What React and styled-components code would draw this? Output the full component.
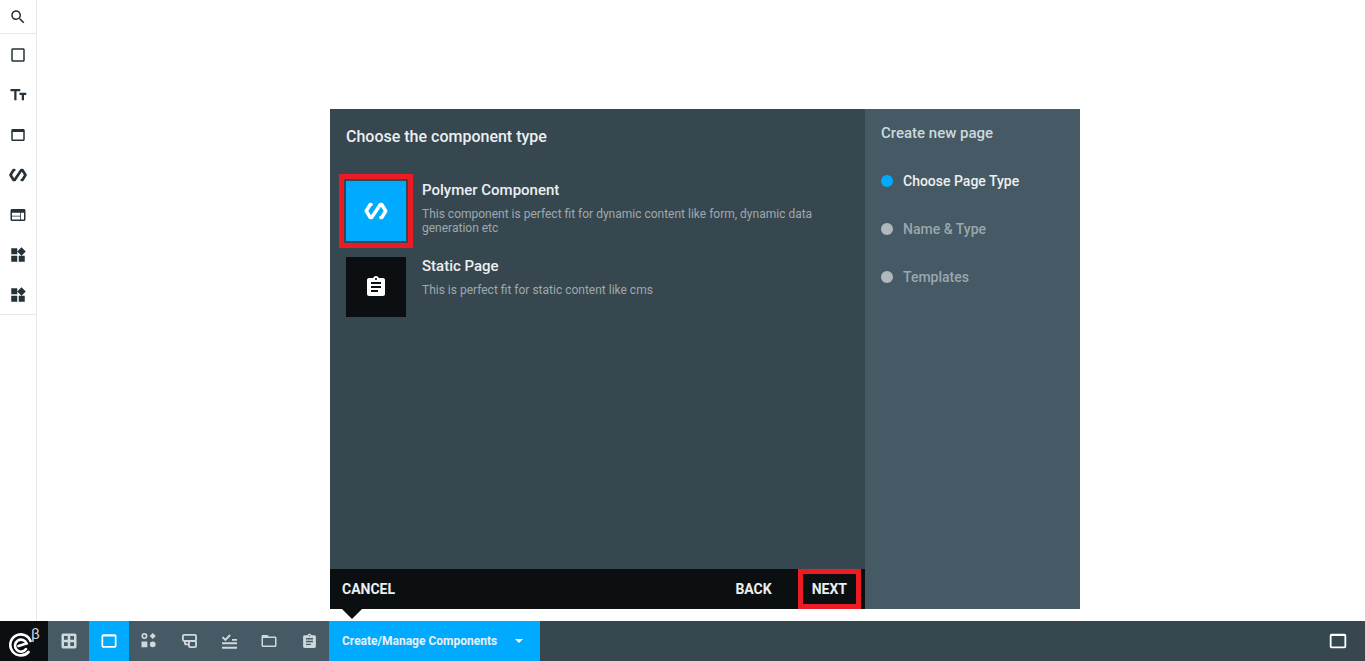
import React from 'react'
import styled, { createGlobalStyle } from 'styled-components'

const BLUE = '#00aaff'
const BLACK = '#0b0f12'
const DARK = '#37474f'
const SLATE = '#455a64'
const RED = '#ed1c24'

const paths = {
  search: 'M15.5 14h-.79l-.28-.27C15.41 12.59 16 11.11 16 9.5 16 5.91 13.09 3 9.5 3S3 5.91 3 9.5 5.91 16 9.5 16c1.61 0 3.09-.59 4.23-1.57l.27.28v.79l5 4.99L20.49 19l-4.99-5zm-6 0C7.01 14 5 11.99 5 9.5S7.01 5 9.5 5 14 7.01 14 9.5 11.99 14 9.5 14z',
  square: 'M19 5v14H5V5h14m0-2H5c-1.1 0-2 .9-2 2v14c0 1.1.9 2 2 2h14c1.1 0 2-.9 2-2V5c0-1.1-.9-2-2-2z',
  size: 'M2 4v3h5v12h3V7h5V4H2zm12 5v3h3v7h3v-7h3V9h-9z',
  asset: 'M19 4H5c-1.11 0-2 .9-2 2v12c0 1.1.89 2 2 2h14c1.1 0 2-.9 2-2V6c0-1.1-.89-2-2-2zm0 14H5V8h14v10z',
  frame: 'M19 4H5a2 2 0 0 0-2 2v12a2 2 0 0 0 2 2h14a2 2 0 0 0 2-2V6a2 2 0 0 0-2-2zm0 14H5V6.5h14V18z',
  web: 'M20 4H4c-1.1 0-1.99.9-1.99 2L2 18c0 1.1.9 2 2 2h16c1.1 0 2-.9 2-2V6c0-1.1-.9-2-2-2zm-5 14H4v-4h11v4zm0-5H4V9h11v4zm5 5h-4V9h4v9z',
  widgets: 'M13 13v8h8v-8h-8zM3 21h8v-8H3v8zM3 3v8h8V3H3zm13.66-1.31L11 7.34 16.66 13l5.66-5.66-5.66-5.65z',
  assignment: 'M19 3h-4.18C14.4 1.84 13.3 1 12 1c-1.3 0-2.4.84-2.82 2H5c-1.1 0-2 .9-2 2v14c0 1.1.9 2 2 2h14c1.1 0 2-.9 2-2V5c0-1.1-.9-2-2-2zm-7 0c.55 0 1 .45 1 1s-.45 1-1 1-1-.45-1-1 .45-1 1-1zm2 14H7v-2h7v2zm3-4H7v-2h10v2zm0-4H7V7h10v2z',
  folder: 'M20 6h-8l-2-2H4c-1.1 0-1.99.9-1.99 2L2 18c0 1.1.9 2 2 2h16c1.1 0 2-.9 2-2V8c0-1.1-.9-2-2-2zm0 12H4V8h16v10z',
  grid: 'M5 3h14a2 2 0 0 1 2 2v14a2 2 0 0 1-2 2H5a2 2 0 0 1-2-2V5a2 2 0 0 1 2-2zm1 3v4.5h4.5V6H6zm7.5 0v4.5H18V6h-4.5zM6 13.5V18h4.5v-4.5H6zm7.5 0V18H18v-4.5h-4.5z',
  shapes: 'M6.5 2.5a3.6 3.6 0 1 1 0 7.2 3.6 3.6 0 0 1 0-7.2zm0 2a1.6 1.6 0 1 0 0 3.2 1.6 1.6 0 0 0 0-3.2zM16.5 2.5l3.7 3.6-3.7 3.6-3.7-3.6zM3 12.5h7v7H3zM16.5 12.5a3.5 3.5 0 1 1 0 7 3.5 3.5 0 0 1 0-7z',
  checks: 'M3.6 13.4h18v2.4h-18zM3.6 19h18v2.4h-18zM15.6 9.6h6v2h-6zM5 6.5l2.6 2.6L12.6 4l1.6 1.6-6.6 6.6-4.2-4.2z',
}

// drawn as strokes, the rounded joins of these do not come out as plain fills
const strokes = {
  polymer: 'M7.5 6H6.7L3 12l3.7 6H8L16 6h1.3L21 12l-3.7 6h-.8',
  flow: 'M6.5 4.7h12.5a1.5 1.5 0 0 1 1.5 1.5v4.3a1.5 1.5 0 0 1-1.5 1.5H6.2a1.5 1.5 0 0 1-1.5-1.5V6.2a1.5 1.5 0 0 1 1.5-1.5zM13.4 12h5.6a1.5 1.5 0 0 1 1.5 1.5v4.3a1.5 1.5 0 0 1-1.5 1.5h-5.6a1.5 1.5 0 0 1-1.5-1.5v-4.3a1.5 1.5 0 0 1 1.5-1.5zM7 12v2a2 2 0 0 0 2 2h2.9',
}

const GlobalStyle = createGlobalStyle`
  html, body {
    margin: 0;
    height: 100%;
    background: #fff;
    overflow: hidden;
  }
  #root {
    height: 100%;
  }
`

const Page = styled.div`
  display: flex;
  flex-direction: column;
  height: 661px;
  font-family: Roboto, "Liberation Sans", sans-serif;
`

const Main = styled.div`
  display: flex;
  flex: 1;
  min-height: 0;
`

const Rail = styled.aside`
  width: 36px;
  flex: none;
  border-right: 1px solid #e8e8e8;
  color: #263238;
`

const RailGroup = styled.div`
  display: flex;
  flex-direction: column;
  border-bottom: 1px solid #e8e8e8;
`

const RailItem = styled.div`
  display: flex;
  align-items: center;
  justify-content: center;
  box-sizing: border-box;
  height: ${props => props.short ? '33px' : '40px'};
  padding-top: ${props => props.short ? '0' : '2px'};
`

const Stage = styled.div`
  flex: 1;
  padding: 109px 0 0 293px;
`

const Modal = styled.section`
  display: grid;
  grid-template-columns: 535px 215px;
  width: 750px;
  height: 500px;
`

const Content = styled.div`
  display: flex;
  flex-direction: column;
  background: ${DARK};
`

const Title = styled.h2`
  margin: 0;
  height: 72px;
  padding: 19px 16px 0;
  box-sizing: border-box;
  font-size: 16px;
  line-height: 18px;
  font-weight: 500;
  color: #eceff1;
`

const TypeList = styled.div`
  flex: 1;
  display: flex;
  flex-direction: column;
  gap: 16px;
  padding: 0 16px;
`

const TypeRow = styled.div`
  display: flex;
  gap: 16px;
`

const TypeIcon = styled.div`
  display: flex;
  align-items: center;
  justify-content: center;
  flex: none;
  width: 60px;
  height: 60px;
  background: ${props => props.selected ? BLUE : BLACK};
  outline: ${props => props.selected ? `5px solid ${RED}` : 'none'};
  outline-offset: 2px;
  color: #fff;
`

const TypeText = styled.div`
  padding-top: 1px;
  width: 410px;
`

const TypeName = styled.div`
  font-size: 15px;
  line-height: 16px;
  font-weight: 500;
  color: #eceff1;
`

const TypeDesc = styled.p`
  margin: 9px 0 0;
  font-size: 12px;
  line-height: 14px;
  color: #9fa9ae;
`

const Footer = styled.footer`
  display: flex;
  align-items: stretch;
  height: 40px;
  padding: 0 4px 0 0;
  background: ${BLACK};
`

const FooterButton = styled.div`
  display: flex;
  align-items: center;
  justify-content: center;
  padding: 0 ${props => props.next ? '14px' : '12px'};
  margin-right: ${props => props.back ? '14px' : '0'};
  margin-left: ${props => props.back ? 'auto' : '0'};
  outline: ${props => props.next ? `5px solid ${RED}` : 'none'};
  outline-offset: -5px;
  font-size: 14px;
  font-weight: 700;
  color: #eceff1;
`

const Steps = styled.nav`
  background: ${SLATE};
  padding: 15px 16px;
`

const StepsTitle = styled.div`
  font-size: 15px;
  line-height: 18px;
  font-weight: 500;
  color: #cfd8dc;
  margin-bottom: 15px;
`

const Step = styled.div`
  display: flex;
  align-items: center;
  gap: 10px;
  height: 48px;
  font-size: 14px;
  font-weight: 500;
  color: ${props => props.active ? '#eceff1' : '#9aa7ae'};
`

const Dot = styled.span`
  width: 12px;
  height: 12px;
  border-radius: 50%;
  background: ${props => props.active ? BLUE : '#b0b8bd'};
`

const Bar = styled.footer`
  display: flex;
  flex: none;
  height: 40px;
  background: ${DARK};
`

const Logo = styled.div`
  position: relative;
  display: flex;
  align-items: center;
  flex: none;
  width: 48px;
  padding: 7px 0 0 9px;
  box-sizing: border-box;
  background: ${BLACK};
  color: #fff;
`

const Beta = styled.span`
  position: absolute;
  top: 5px;
  left: 31px;
  font-size: 15px;
  line-height: 16px;
  color: #cfd8dc;
`

const Tools = styled.div`
  display: flex;
  flex: none;
  width: 281px;
  padding-left: 1px;
  box-sizing: border-box;
  background: ${SLATE};
`

const Tool = styled.div`
  display: flex;
  align-items: center;
  justify-content: center;
  width: 40px;
  background: ${props => props.active ? BLUE : 'transparent'};
  color: ${props => props.active ? '#fff' : '#cfd8dc'};
`

const CreateTab = styled.div`
  position: relative;
  display: flex;
  align-items: center;
  flex: none;
  width: 211px;
  padding: 0 0 0 13px;
  box-sizing: border-box;
  background: ${BLUE};
  font-size: 12px;
  font-weight: 700;
  color: #eceff1;
  &::before {
    content: '';
    position: absolute;
    top: -12px;
    left: 13px;
    border-style: solid;
    border-width: 10px 10px 0;
    border-color: ${BLACK} transparent transparent;
  }
`

const Caret = styled.span`
  margin-left: 18px;
  border-style: solid;
  border-width: 4px 4.5px 0;
  border-color: #fff transparent transparent;
`

const BarEnd = styled.div`
  display: flex;
  align-items: center;
  margin-left: auto;
  padding-right: 16px;
  color: #fff;
`

const Icon = ({ name, size = 18 }) => {
  if (strokes[name]) {
    const width = name === 'polymer' ? 3.2 : 2.2
    return (
      <svg width={size} height={size} viewBox="0 0 24 24" fill="none" stroke="currentColor" strokeWidth={width} strokeLinecap="round" strokeLinejoin="round">
        <path d={strokes[name]} />
      </svg>
    )
  }
  return (
    <svg width={size} height={size} viewBox="0 0 24 24" fill="currentColor" fillRule="evenodd">
      <path d={paths[name]} />
    </svg>
  )
}

const railIcons = [
  { name: 'square' },
  { name: 'size' },
  { name: 'asset' },
  { name: 'polymer', size: 20 },
  { name: 'web' },
  { name: 'widgets' },
  { name: 'widgets' },
]

const barIcons = [
  { name: 'grid', size: 20 },
  { name: 'frame', size: 20 },
  { name: 'shapes', size: 20 },
  { name: 'flow', size: 20 },
  { name: 'checks', size: 20 },
  { name: 'folder', size: 18 },
  { name: 'assignment', size: 17 },
]

const App = () => (
  <Page>
    <GlobalStyle />
    <Main>
      <Rail>
        <RailGroup>
          <RailItem short><Icon name="search" /></RailItem>
        </RailGroup>
        <RailGroup>
          {railIcons.map((icon, i) => (
            <RailItem key={i}><Icon {...icon} /></RailItem>
          ))}
        </RailGroup>
      </Rail>
      <Stage>
        <Modal>
          <Content>
            <Title>Choose the component type</Title>
            <TypeList>
              <TypeRow>
                <TypeIcon selected><Icon name="polymer" size={26} /></TypeIcon>
                <TypeText>
                  <TypeName>Polymer Component</TypeName>
                  <TypeDesc>This component is perfect fit for dynamic content like form, dynamic data generation etc</TypeDesc>
                </TypeText>
              </TypeRow>
              <TypeRow>
                <TypeIcon><Icon name="assignment" size={24} /></TypeIcon>
                <TypeText>
                  <TypeName>Static Page</TypeName>
                  <TypeDesc>This is perfect fit for static content like cms</TypeDesc>
                </TypeText>
              </TypeRow>
            </TypeList>
            <Footer>
              <FooterButton>CANCEL</FooterButton>
              <FooterButton back>BACK</FooterButton>
              <FooterButton next>NEXT</FooterButton>
            </Footer>
          </Content>
          <Steps>
            <StepsTitle>Create new page</StepsTitle>
            <Step active><Dot active />Choose Page Type</Step>
            <Step><Dot />Name &amp; Type</Step>
            <Step><Dot />Templates</Step>
          </Steps>
        </Modal>
      </Stage>
    </Main>
    <Bar>
      <Logo>
        <svg width="24" height="24" viewBox="0 0 24 24" fill="none" stroke="currentColor" strokeWidth="2.6" strokeLinecap="round">
          <path d="M19.5 19A10.5 10.5 0 1 1 21.5 8" />
          <path d="M17 16A6 6 0 1 1 17.6 10.5L9.5 13" />
        </svg>
        <Beta>β</Beta>
      </Logo>
      <Tools>
        {barIcons.map((icon, i) => (
          <Tool key={i} active={i === 1}><Icon {...icon} /></Tool>
        ))}
      </Tools>
      <CreateTab>
        Create/Manage Components
        <Caret />
      </CreateTab>
      <BarEnd><Icon name="frame" size={22} /></BarEnd>
    </Bar>
  </Page>
)

export default App
